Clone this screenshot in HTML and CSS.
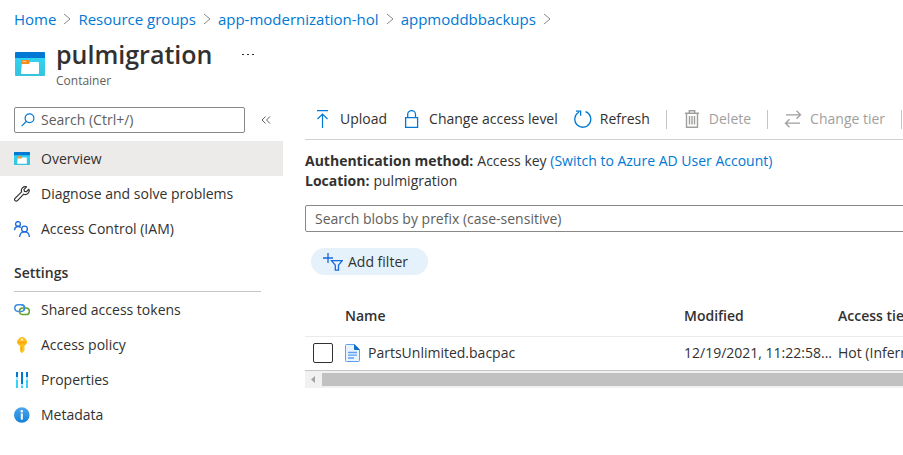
FILE: index.html
```html
<!DOCTYPE html>
<html lang="en">
<head>
<meta charset="utf-8">
<title>pulmigration - Container</title>
<link rel="stylesheet" href="styles.css">
</head>
<body>
<svg class="defs" aria-hidden="true">
  <defs>
    <linearGradient id="cyan" x1="0" y1="0" x2="0" y2="1"><stop offset="0" stop-color="#32d4f5"/><stop offset="1" stop-color="#37c2dd"/></linearGradient>
    <linearGradient id="info" x1="0" y1="0" x2="0" y2="1"><stop offset="0" stop-color="#4ea7ec"/><stop offset="1" stop-color="#1580d6"/></linearGradient>
    <linearGradient id="gold" x1="0" y1="0" x2="0" y2="1"><stop offset="0" stop-color="#fdb813"/><stop offset="1" stop-color="#fbc82a"/></linearGradient>
    <symbol id="container" viewBox="0 0 30 24">
      <path fill="url(#cyan)" d="M0 5h30v18a1 1 0 0 1-1 1H1a1 1 0 0 1-1-1z"/>
      <path fill="#0078d4" d="M1 0h28a1 1 0 0 1 1 1v5H0V1a1 1 0 0 1 1-1z"/>
      <path fill="#fff" d="M7 10h16a1 1 0 0 1 1 1v10a1 1 0 0 1-1 1H7a1 1 0 0 1-1-1z"/>
      <path fill="#f78d1e" d="M7 8h7l1 2-1 2H6V9a1 1 0 0 1 1-1z"/>
      <path fill="#ffd8a8" d="M8 9h3v1H8z"/>
    </symbol>
    <symbol id="chevron" viewBox="0 0 8 12"><path fill="none" stroke="#8a8886" d="M1 1l6 5-6 5"/></symbol>
  </defs>
</svg>
<header class="top">
  <nav class="crumbs" aria-label="Breadcrumb">
    <a href="#">Home</a><svg><use href="#chevron"/></svg>
    <a href="#">Resource groups</a><svg><use href="#chevron"/></svg>
    <a href="#">app-modernization-hol</a><svg><use href="#chevron"/></svg>
    <a href="#">appmoddbbackups</a><svg><use href="#chevron"/></svg>
  </nav>
  <div class="heading">
    <svg class="logo"><use href="#container"/></svg>
    <div>
      <div class="title-row">
        <h1>pulmigration</h1>
        <button class="more" aria-label="More"><svg viewBox="0 0 13 3"><path fill="#323130" d="M0 1h2v1H0zM5 1h2v1H5zM10 1h2v1h-2z"/></svg></button>
      </div>
      <p class="kind">Container</p>
    </div>
  </div>
</header>
<div class="body">
  <aside class="side">
    <div class="side-search">
      <label class="menu-search">
        <svg viewBox="0 0 14 14"><g fill="none" stroke="#0078d4" stroke-width="1.2"><circle cx="8.5" cy="5.3" r="4.4"/><path d="M5.3 8.5L.6 13.2"/></g></svg>
        <input type="text" placeholder="Search (Ctrl+/)" aria-label="Search menu">
      </label>
      <button class="collapse" aria-label="Collapse menu"><svg viewBox="0 0 10 8"><path fill="none" stroke="#605e5c" d="M4.5.5L1 4l3.500 3.500M9 .5L5.500 4 9 7.500"/></svg></button>
    </div>
    <nav class="menu" aria-label="Overview">
      <a class="current" href="#"><svg class="wide" viewBox="0 0 30 24"><use href="#container"/></svg>Overview</a>
      <a href="#"><svg viewBox="0 0 16 16"><path fill="none" stroke="#323130" stroke-width="1.200" stroke-linejoin="round" d="M12.600.9a3.900 3.900 0 0 0-5 5L1 12.400a1.500 1.500 0 0 0 0 2.100 1.500 1.500 0 0 0 2.200.3l6.500-6.600a3.900 3.900 0 0 0 5.200-5l-2.600 2.500-1.900-.4-.4-1.900z"/></svg>Diagnose and solve problems</a>
      <a href="#"><svg viewBox="0 0 16 16"><g fill="none" stroke="#1668de" stroke-width="1.300"><circle cx="4" cy="3" r="2.400"/><path d="M.6 9.200C.7 6.800 2 5.500 4 5.500c1 0 2 .3 2.700 1"/><circle cx="10.500" cy="8" r="2.900"/><path d="M5.600 16c.2-3.200 2-5.100 4.900-5.100s4.700 1.900 4.900 5.100"/></g></svg>Access Control (IAM)</a>
    </nav>
    <h2>Settings</h2>
    <nav class="menu" aria-label="Settings">
      <a href="#"><svg viewBox="0 0 16 16"><g fill="none" stroke-width="1.500"><rect x=".8" y="2.800" width="9.800" height="6.600" rx="3.300" stroke="#3b8ee0"/><rect x="5.500" y="6" width="9.800" height="6.600" rx="3.300" stroke="#5fa52e"/><path stroke="#3b8ee0" d="M7.300 2.800a3.300 3.300 0 0 1 3.300 3.300c0 1.200-.5 2-1.200 2.600"/></g></svg>Shared access tokens</a>
      <a href="#"><svg viewBox="0 0 16 16"><path fill="url(#gold)" d="M6 .6Q8-.4 10 .6l2.400 2.300q.6.600.6 1.400v1.200q0 .8-.6 1.400L10.500 9v4.500L8.500 16h-.8L6 14.200V9L3.700 6.900Q3 6.300 3 5.500V4.300q0-.8.700-1.400z"/><circle cx="8" cy="2.600" r="1.200" fill="#fff3c4"/><path fill="#ff9300" d="M4.500 5.300h7v1h-7zM7 9.500h.8v4H7z"/></svg>Access policy</a>
      <a href="#"><svg viewBox="0 0 16 16"><path fill="#32d4f5" d="M2 6h2v10H2zM7 12h2v4H7zM12 6h2v10h-2z"/><path fill="#9cebff" d="M2 5h2v3H2zM7 12h2v2H7zM12 5h2v3h-2z"/><path fill="#0078d4" d="M2 0h2v5H2zM7 0h2v12H7zM12 0h2v5h-2z"/></svg>Properties</a>
      <a href="#"><svg viewBox="0 0 16 16"><circle cx="7.800" cy="8" r="7.800" fill="url(#info)"/><circle cx="7.800" cy="4.200" r="1.200" fill="#fff"/><path fill="#fff" d="M6.800 6.400h2v6.200h-2z"/></svg>Metadata</a>
    </nav>
  </aside>
  <main class="main">
    <div class="toolbar">
      <button><svg viewBox="0 0 18 18"><path fill="none" stroke="#0078d4" stroke-width="1.200" d="M3 .6h11M8.500 18V4M3.500 9l5-5 5 5"/></svg>Upload</button>
      <button><svg viewBox="0 0 18 18"><path fill="none" stroke="#0078d4" stroke-width="1.300" d="M2.600 7.600h12v9.800h-12zM4.700 7.600V4.500a3.900 3.900 0 0 1 7.800 0v3.100"/></svg>Change access level</button>
      <button><svg viewBox="0 0 18 18"><path fill="none" stroke="#0078d4" stroke-width="1.300" d="M11.500 1.700A8 8 0 1 1 4.800 2.300M2 1.200h4.600v4.600"/></svg>Refresh</button>
      <span class="divider"></span>
      <button disabled><svg viewBox="0 0 18 18"><path fill="none" stroke="#a19f9d" stroke-width="1.400" d="M2 3.200h14M6.300 3V.8h5.400V3M3.500 3.500v13.700h11V3.500M6.500 6v8.500M9 6v8.500M11.500 6v8.500"/></svg>Delete</button>
      <span class="divider"></span>
      <button disabled><svg viewBox="0 0 18 18"><path fill="none" stroke="#a19f9d" stroke-width="1.300" d="M2 4.800h14.500M12.500.8l4 4-4 4M16 13.200H1.500M5.500 9.200l-4 4 4 4"/></svg>Change tier</button>
      <span class="divider"></span>
    </div>
    <dl class="facts">
      <div><dt>Authentication method:</dt><dd>Access key <a href="#">(Switch to Azure AD User Account)</a></dd></div>
      <div><dt>Location:</dt><dd>pulmigration</dd></div>
    </dl>
    <input class="blob-search" type="text" placeholder="Search blobs by prefix (case-sensitive)" aria-label="Search blobs by prefix">
    <button class="filter"><svg viewBox="0 0 20 18"><path fill="none" stroke="#1668de" stroke-width="1.300" d="M5 0v10M0 5h10M8.500 7.700h10.700l-3.700 4.500v4.900h-3.200v-4.900z"/></svg>Add filter</button>
    <div class="grid">
      <table>
        <colgroup><col class="c-check"><col class="c-name"><col class="c-date"><col class="c-tier"></colgroup>
        <thead><tr><td></td><th>Name</th><th>Modified</th><th>Access tier</th></tr></thead>
        <tbody><tr>
          <td class="check"><input type="checkbox" aria-label="Select PartsUnlimited.bacpac"></td>
          <td><span class="file"><svg viewBox="0 0 15 18"><path fill="#e9f3fd" stroke="#5ea0ef" d="M1.500.5h8l5 5v11a1 1 0 0 1-1 1h-12a1 1 0 0 1-1-1v-15a1 1 0 0 1 1-1z"/><path fill="#0f6fd0" d="M9 0l6 6H10a1 1 0 0 1-1-1z"/><path stroke="#5ea0ef" stroke-width="1.300" d="M3 8.500h9M3 11.200h9M3 14h6"/></svg>PartsUnlimited.bacpac</span></td>
          <td>12/19/2021, 11:22:58...</td>
          <td>Hot (Inferred)</td>
        </tr></tbody>
      </table>
    </div>
    <div class="scroll"><svg viewBox="0 0 17 17"><path fill="#a3a3a3" d="M10 5v7L6 8.500z"/></svg><div class="thumb"></div></div>
  </main>
</div>
</body>
</html>
```

FILE: styles.css
```css
* { box-sizing: border-box; }
body {
  margin: 0;
  overflow: hidden;
  background: #fff;
  color: #323130;
  font: 14px/20px "Open Sans", "Segoe UI", sans-serif;
}
a { color: #0078d4; text-decoration: none; }
button { padding: 0; border: 0; background: none; color: inherit; font: inherit; }
svg { flex: none; display: block; }
h1, h2, p, dl, dd { margin: 0; }
.defs { position: absolute; width: 0; height: 0; }

.crumbs { display: flex; align-items: center; gap: 7px; padding: 9px 14px 0; font-size: 15px; white-space: nowrap; }
.crumbs svg { width: 8px; height: 12px; }
.heading { display: flex; gap: 11px; padding: 7px 15px 0; }
.logo { width: 30px; height: 24px; margin-top: 16px; }
.title-row { display: flex; align-items: center; gap: 30px; }
h1 { font-size: 25px; line-height: 36px; font-weight: 600; }
.more svg { width: 13px; height: 3px; }
.kind { color: #605e5c; font-size: 12px; line-height: 18px; }

.body { display: flex; padding-top: 7px; }
.side { flex: none; width: 283px; padding-top: 10px; }
.side-search { display: flex; align-items: center; gap: 16px; padding-left: 14px; margin-bottom: 8px; }
.menu-search { display: flex; align-items: center; gap: 6px; width: 231px; height: 26px; padding: 0 6px; border: 1px solid #8a8886; border-radius: 2px; }
.menu-search svg { width: 14px; height: 14px; }
input { font: inherit; color: inherit; }
input::placeholder { color: #605e5c; opacity: 1; }
.menu-search input { flex: 1; min-width: 0; padding: 0; border: 0; outline: 0; background: none; }
.collapse svg { width: 10px; height: 8px; }
.menu a { display: flex; align-items: center; gap: 11px; height: 35px; padding-left: 14px; color: #323130; }
.menu svg { width: 16px; height: 16px; }
.menu .wide { height: 13px; }
.menu .current { background: #edebe9; }
h2 { margin: 17px 22px 0 14px; padding-bottom: 8px; border-bottom: 1px solid #c8c6c4; font-size: 14px; line-height: 20px; font-weight: 600; }

.main { flex: 1; min-width: 0; padding-left: 22px; }
.toolbar { display: flex; align-items: center; gap: 16px; height: 43px; padding: 2px 0 0 9px; border-bottom: 1px solid #d2d0ce; overflow: hidden; white-space: nowrap; }
.toolbar button { flex: none; display: flex; align-items: center; gap: 8px; }
.toolbar svg { width: 18px; height: 18px; }
.toolbar button:disabled { color: #a19f9d; }
.divider { flex: none; width: 1px; height: 19px; background: #c8c6c4; }
.facts { padding: 11px 0 14px; line-height: 20px; }
.facts div { display: flex; gap: 4px; white-space: nowrap; }
dt { font-weight: 700; }
.blob-search { display: block; width: calc(100% + 4px); height: 27px; padding: 0 9px; border: 1px solid #8a8886; border-radius: 2px; }
.filter { display: flex; align-items: center; gap: 5px; height: 27px; margin: 16px 0 0 6px; padding: 0 20px 0 12px; border-radius: 14px; background: #e5f1fb; }
.filter svg { width: 20px; height: 18px; }

.grid { overflow: hidden; margin-top: 22px; border-bottom: 1px solid #c8c6c4; }
table { width: 100%; min-width: 675px; table-layout: fixed; border-collapse: collapse; white-space: nowrap; }
th, td { height: 34px; padding: 0 0 0 8px; text-align: left; }
thead tr { height: 39px; border-bottom: 1px solid #edebe9; }
th { font-weight: 600; }
.c-check { width: 32px; }
.c-date { width: 154px; }
.c-tier { width: 150px; }
.check input { appearance: none; display: block; width: 20px; height: 20px; margin: 0; border: 1px solid #323130; border-radius: 2px; background: #fff; }
.file { display: flex; align-items: center; gap: 8px; }
.file svg { width: 15px; height: 18px; }
.scroll { display: flex; align-items: center; height: 17px; background: #f1f1f1; }
.scroll svg { width: 17px; height: 17px; }
.thumb { flex: 1; height: 13px; background: #c1c1c1; }
```
